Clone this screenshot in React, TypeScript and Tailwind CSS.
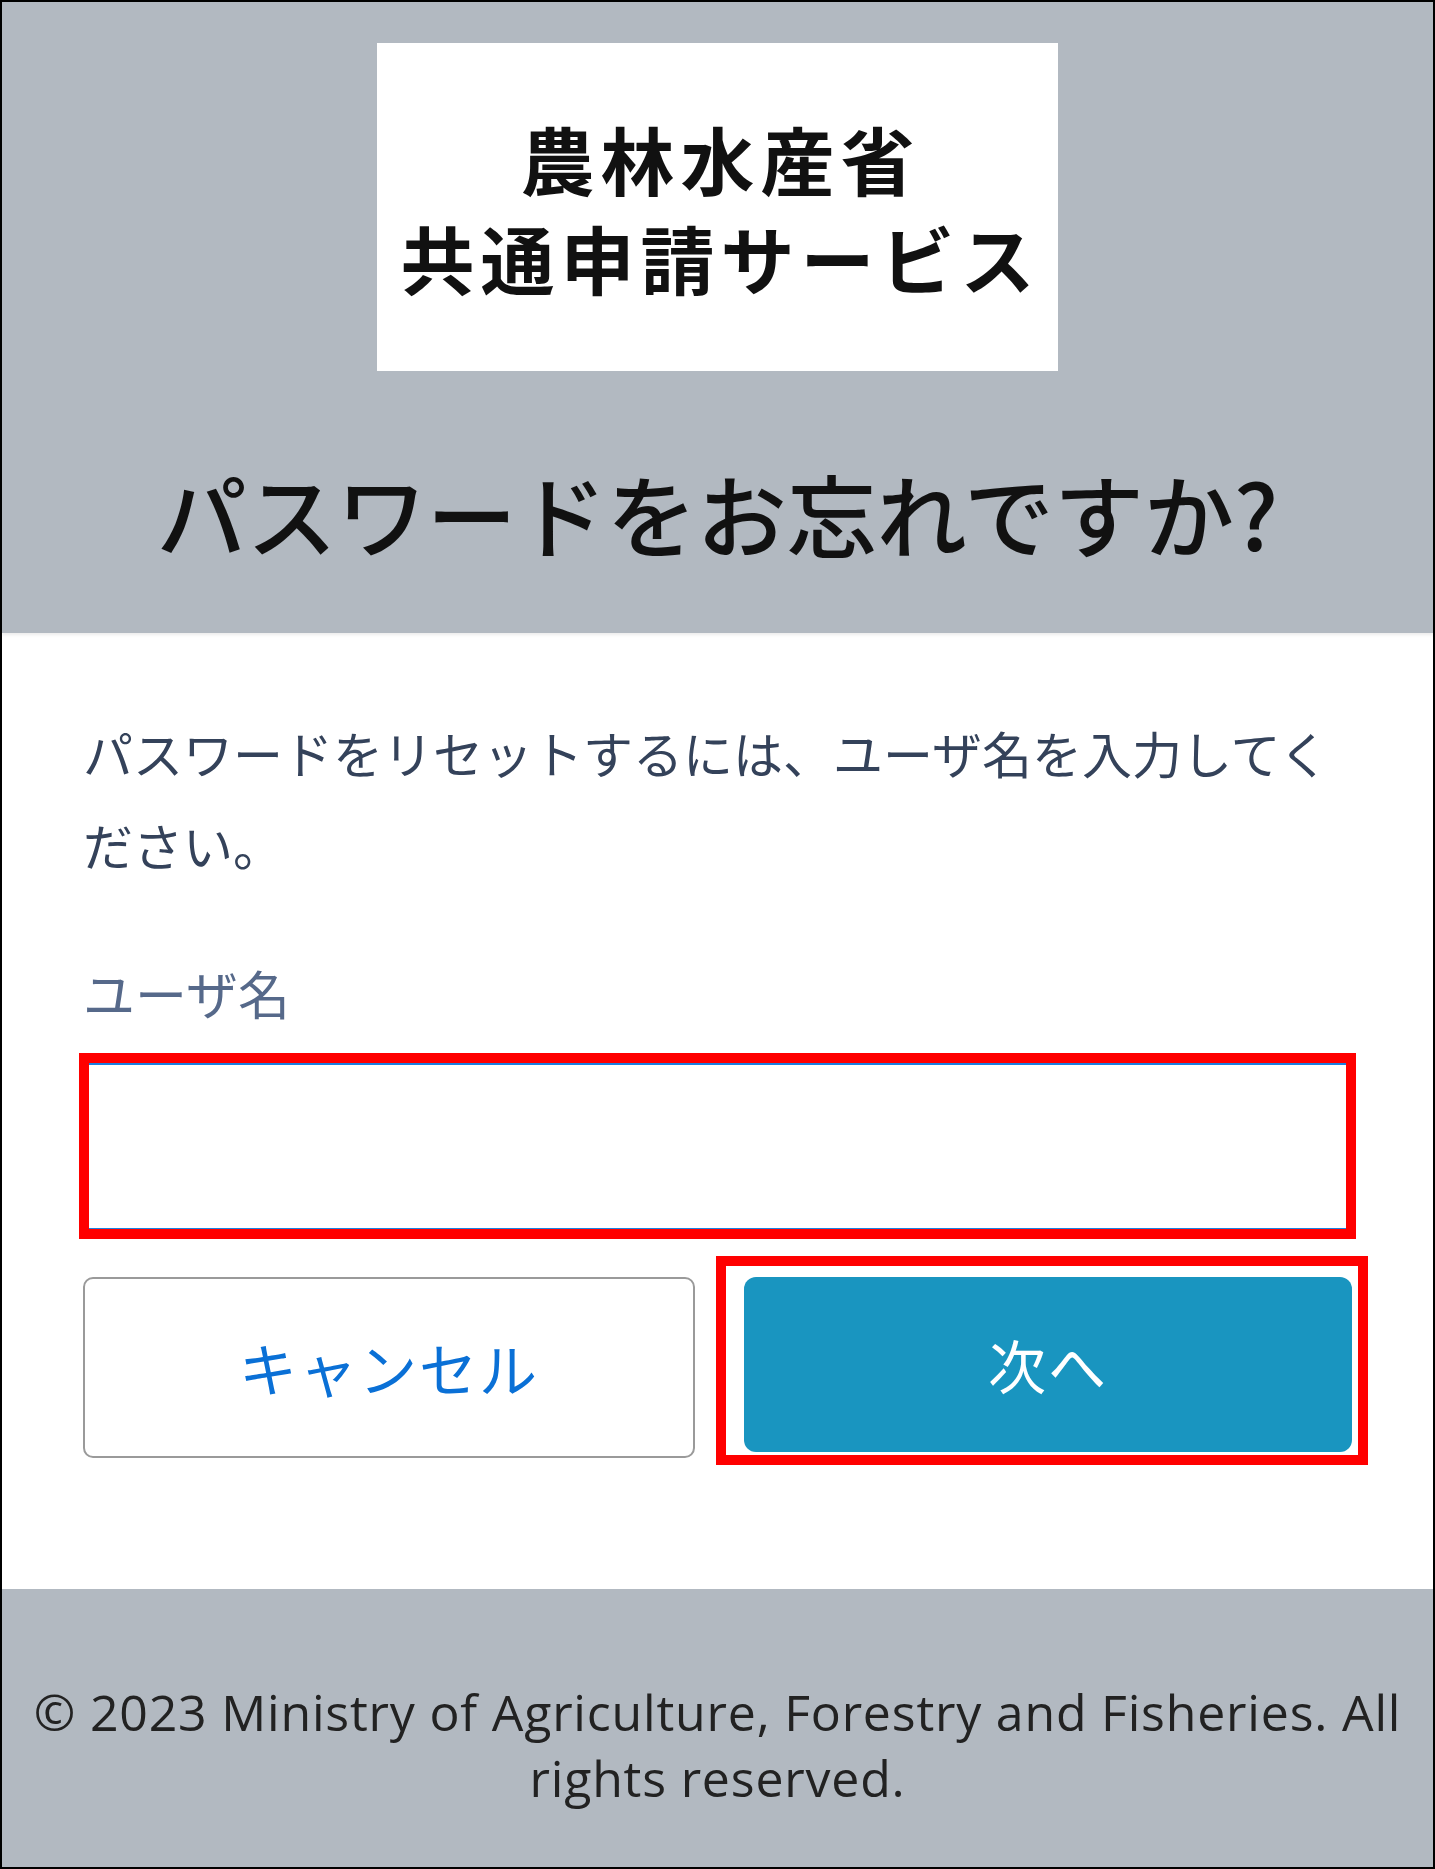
import React, { useState } from 'react';

const jp = "font-['Noto_Sans_CJK_JP','Noto_Sans',sans-serif]";

const App = () => {
  const [username, setUsername] = useState('');

  return (
    <div className={`w-[1435px] h-[1869px] border-2 border-black flex flex-col ${jp}`}>
      {/* header */}
      <div className="h-[631px] bg-[#b2b9c1] flex flex-col items-center pt-[41px] shadow-[0_2px_3px_rgba(0,0,0,0.08)] z-10">
        <div className="w-[681px] h-[328px] bg-white flex flex-col items-center justify-center text-[74px] leading-[99px] font-bold tracking-[6px] text-[#111] pl-[6px]">
          <div>農林水産省</div>
          <div>共通申請サービス</div>
        </div>
        <h1 className="mt-[86px] text-[90px] leading-[110px] font-medium text-[#111]">パスワードをお忘れですか?</h1>
      </div>

      {/* form */}
      <div className="flex-1 bg-white px-[81px] pt-[73px]">
        <p className="text-[50px] leading-[92px] text-[#34425a]">
          パスワードをリセットするには、ユーザ名を入力してください。
        </p>
        <label htmlFor="username" className="block mt-[73px] text-[52px] leading-[60px] text-[#56698a]">
          ユーザ名
        </label>
        <div className="relative mt-[40px]">
          <input
            id="username"
            type="text"
            value={username}
            onChange={(e) => setUsername(e.target.value)}
            className="block w-full h-[167px] px-4 bg-white border-2 border-[#1b7fe0] rounded-md shadow-[0_0_4px_#1589ee] outline-none text-[49px]"
          />
          <div className="absolute -left-[4px] -right-[4px] -top-[10px] -bottom-[9px] border-[10px] border-[#ff0000] pointer-events-none" />
        </div>
        <div className="flex items-start gap-[49px] mt-[47px]">
          <button className="flex-1 h-[181px] bg-white border-2 border-[#9a9a9a] rounded-[10px] text-[58px] text-[#0a70d6] tracking-[2px]">
            キャンセル
          </button>
          <div className="relative flex-1">
            <button className="w-full h-[175px] bg-[#1995c0] rounded-[12px] text-[58px] text-white tracking-[2px]">
              次へ
            </button>
            <div className="absolute -left-[28px] -right-[16px] -top-[21px] -bottom-[13px] border-[10px] border-[#ff0000] pointer-events-none" />
          </div>
        </div>
      </div>

      {/* footer */}
      <div className="h-[278px] bg-[#b2b9c1] pt-[90px] px-[10px] text-center font-['Open_Sans',sans-serif] text-[50px] tracking-[0.8px] leading-[66px] text-[#222]">
        © 2023 Ministry of Agriculture, Forestry and Fisheries. All rights reserved.
      </div>
    </div>
  );
};

export default App;
